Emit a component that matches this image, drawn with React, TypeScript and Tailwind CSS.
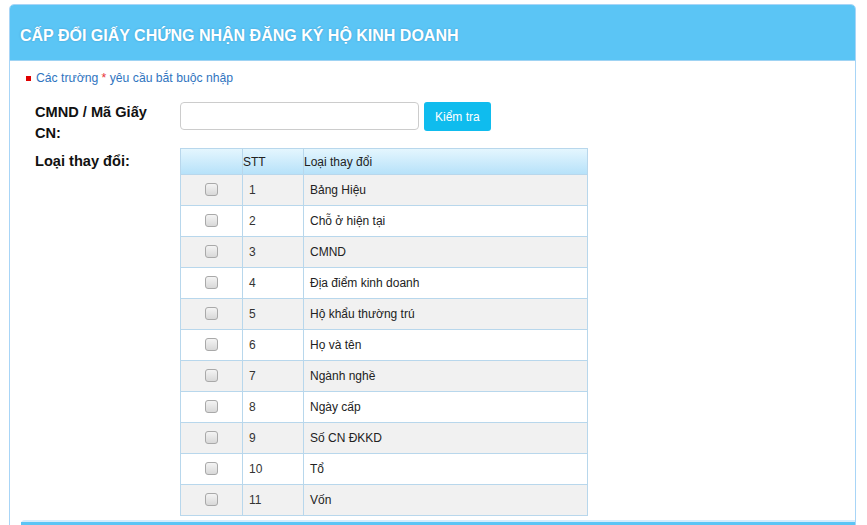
const items = [
  'Bảng Hiệu',
  'Chỗ ở hiện tại',
  'CMND',
  'Địa điểm kinh doanh',
  'Hộ khẩu thường trú',
  'Họ và tên',
  'Ngành nghề',
  'Ngày cấp',
  'Số CN ĐKKD',
  'Tổ',
  'Vốn',
];

function Check() {
  return (
    <span className="inline-block w-[13px] h-[13px] rounded-[3px] border border-[#a9a9a9] bg-gradient-to-b from-[#f4f4f4] to-[#d8d8d8]" />
  );
}

export default function App() {
  return (
    <div
      className="w-[867px] h-[525px] overflow-hidden bg-white pl-[9px] pt-[4px]"
      style={{ fontFamily: '"Liberation Sans", Arial, sans-serif' }}
    >
      <div className="w-[847px] h-[530px] border border-[#a8d5f7] rounded-t-[5px] overflow-hidden">
        {/* header */}
        <div className="h-[56px] bg-[#5bc5f5] border-b border-[#9fd3f3] flex items-center pl-[10px] pt-[7px]">
          <h1 className="text-white font-bold text-[16px] [text-shadow:0_0_2px_rgba(0,80,140,0.35)]">
            CẤP ĐỔI GIẤY CHỨNG NHẬN ĐĂNG KÝ HỘ KINH DOANH
          </h1>
        </div>

        {/* required note */}
        <div className="flex items-center gap-[5px] pl-[16px] pt-[9px] text-[12.2px] leading-[16px] text-[#2f74c0]">
          <span className="w-[5px] h-[5px] bg-[#e00000]" />
          <span>
            Các trường <span className="text-[#e8323c]">*</span> yêu cầu bắt buộc nhập
          </span>
        </div>

        {/* form */}
        <div className="grid grid-cols-[145px_1fr] pl-[25px] pt-[16px] gap-y-[4px]">
          <div className="text-[14.6px] font-bold leading-[21px] text-[#111]">
            CMND / Mã Giấy
            <br />
            CN:
          </div>
          <div className="flex items-start gap-[5px]">
            <input
              className="w-[239px] h-[28px] border border-[#cccccc] rounded-[4px] px-2 text-[13px] outline-none"
              type="text"
            />
            <button className="h-[29px] px-[11px] rounded-[3px] bg-[#0fbcee] text-white text-[12px]">
              Kiểm tra
            </button>
          </div>

          <div className="text-[14.6px] font-bold leading-[21px] text-[#111] pt-[3px]">Loại thay đổi:</div>
          <div>
            <table className="w-[408px] border-collapse text-[12px] text-[#333]">
              <thead>
                <tr className="h-[26px] bg-gradient-to-b from-[#e4f6fe] to-[#b5e1f9]">
                  <th className="w-[62px] border border-[#b8d7ec]" />
                  <th className="w-[61px] border border-[#b8d7ec] text-left font-normal text-[#222] px-0">STT</th>
                  <th className="border border-[#b8d7ec] text-left font-normal text-[#222] px-0">Loại thay đổi</th>
                </tr>
              </thead>
              <tbody>
                {items.map((name, i) => (
                  <tr key={name} className={i % 2 === 0 ? 'h-[31px] bg-[#f1f1f1]' : 'h-[31px] bg-white'}>
                    <td className="border border-[#b8d7ec] text-center align-middle">
                      <span className="inline-flex pt-[3px]">
                        <Check />
                      </span>
                    </td>
                    <td className="border border-[#b8d7ec] pl-[6px] text-[#333]">{i + 1}</td>
                    <td className="border border-[#b8d7ec] pl-[6px] text-[#222]">{name}</td>
                  </tr>
                ))}
              </tbody>
            </table>
          </div>
        </div>

        {/* next panel */}
        <div className="ml-[11px] mt-[4px] h-[20px] border-t-[2px] border-[#d5ecfb] rounded-tl-[4px]">
          <div className="h-full border-t-[3px] border-[#5bc5f5] bg-[#5bc5f5]" />
        </div>
      </div>
    </div>
  );
}
